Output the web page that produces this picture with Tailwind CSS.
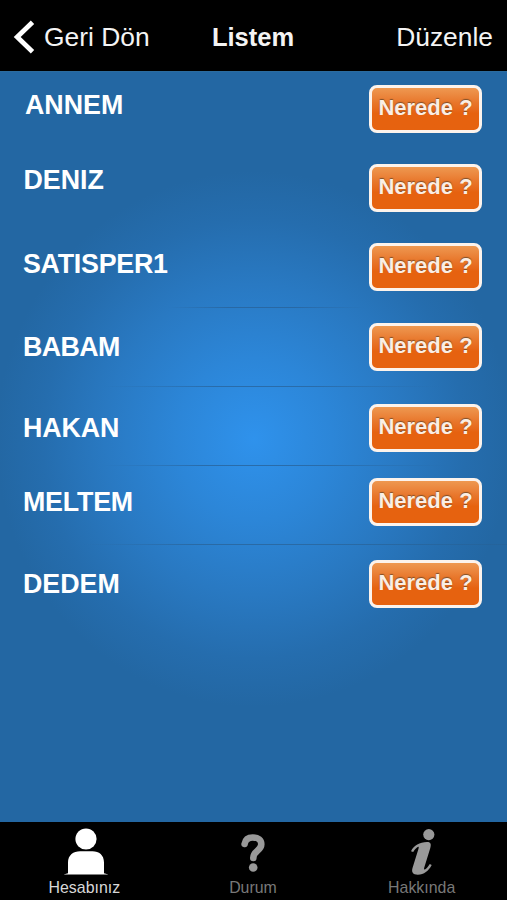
<!DOCTYPE html>
<html lang="tr">
<head>
<meta charset="utf-8">
<title>Listem</title>
<script src="https://cdn.jsdelivr.net/npm/@tailwindcss/browser@4"></script>
</head>
<body class="bg-black">
<div class="flex h-[900px] w-[507px] flex-col overflow-hidden bg-black font-['Liberation_Sans',Arial,sans-serif] text-white">
  <header class="grid h-[71px] shrink-0 grid-cols-3 items-center pr-[14px] pl-[13px] pt-0.5 text-[26.4px] leading-8 text-[#f4f4f4]">
    <a class="flex items-center gap-[9px] whitespace-nowrap">
      <svg class="h-[34px] w-[22px] shrink-0" viewBox="0 0 22 34" fill="none" stroke="#fff" stroke-width="4.8"><path d="M19.500 2.200 4.200 17 19.500 31.800"/></svg>
      <span>Geri Dön</span>
    </a>
    <h1 class="text-center text-[25.5px] font-bold">Listem</h1>
    <a class="text-right">Düzenle</a>
  </header>

  <main class="flex-1 border-t border-[#2b6c9f] bg-[#2367a3] bg-[radial-gradient(ellipse_258px_268px_at_254px_367px,#2f92ec_0%,#2c86d8_30%,#2979c2_58%,#256dae_82%,#2367a3_100%)]">
    <ul class="-mt-px flex flex-col">
      <li class="flex h-[78px] items-start justify-between pr-[25px] pl-[25px]">
        <span class="pt-5 text-[26.8px] leading-7 font-bold">ANNEM</span>
        <button class="mt-[14px] h-12 w-[113px] rounded-[8px] border-[3px] border-[#fcf3ec] bg-linear-to-b from-[#ee9850] via-[#e8762a] via-35% to-[#e6620f] to-60% pb-[3px] text-[22px] leading-7 font-bold whitespace-nowrap text-[#fbeee4] [text-shadow:0_-1px_1px_rgba(80,60,40,.7)]">Nerede ?</button>
      </li>
      <li class="flex h-[79px] items-start justify-between pr-[25px] pl-[23.500px]">
        <span class="pt-[17px] text-[26.8px] leading-7 font-bold">DENIZ</span>
        <button class="mt-[15px] h-12 w-[113px] rounded-[8px] border-[3px] border-[#fcf3ec] bg-linear-to-b from-[#ee9850] via-[#e8762a] via-35% to-[#e6620f] to-60% pb-[3px] text-[22px] leading-7 font-bold whitespace-nowrap text-[#fbeee4] [text-shadow:0_-1px_1px_rgba(80,60,40,.7)]">Nerede ?</button>
      </li>
      <li class="flex h-20 items-start justify-between bg-[linear-gradient(90deg,transparent_33%,#2868a4_45%,#2868a4_58%,transparent_72%)] bg-[length:100%_1px] bg-bottom bg-no-repeat pr-[25px] pl-[23px]">
        <span class="pt-[22px] text-[26.8px] leading-7 font-bold tracking-[-0.25px]">SATISPER1</span>
        <button class="mt-[15px] h-12 w-[113px] rounded-[8px] border-[3px] border-[#fcf3ec] bg-linear-to-b from-[#ee9850] via-[#e8762a] via-35% to-[#e6620f] to-60% pb-[3px] text-[22px] leading-7 font-bold whitespace-nowrap text-[#fbeee4] [text-shadow:0_-1px_1px_rgba(80,60,40,.7)]">Nerede ?</button>
      </li>
      <li class="flex h-[79px] items-start justify-between bg-[linear-gradient(90deg,transparent_20%,#296caa_42%,#296caa_62%,transparent_88%)] bg-[length:100%_1px] bg-bottom bg-no-repeat pr-[25px] pl-[23px]">
        <span class="pt-[25px] text-[26.8px] leading-7 font-bold tracking-[-0.6px]">BABAM</span>
        <button class="mt-[15px] h-12 w-[113px] rounded-[8px] border-[3px] border-[#fcf3ec] bg-linear-to-b from-[#ee9850] via-[#e8762a] via-35% to-[#e6620f] to-60% pb-[3px] text-[22px] leading-7 font-bold whitespace-nowrap text-[#fbeee4] [text-shadow:0_-1px_1px_rgba(80,60,40,.7)]">Nerede ?</button>
      </li>
      <li class="flex h-[79px] items-start justify-between bg-[linear-gradient(90deg,transparent_20%,#296caa_40%,#296caa_64%,transparent_90%)] bg-[length:100%_1px] bg-bottom bg-no-repeat pr-[25px] pl-[23px]">
        <span class="pt-[27px] text-[26.8px] leading-7 font-bold tracking-[-0.1px]">HAKAN</span>
        <button class="mt-[17px] h-12 w-[113px] rounded-[8px] border-[3px] border-[#fcf3ec] bg-linear-to-b from-[#ee9850] via-[#e8762a] via-35% to-[#e6620f] to-60% pb-[3px] text-[22px] leading-7 font-bold whitespace-nowrap text-[#fbeee4] [text-shadow:0_-1px_1px_rgba(80,60,40,.7)]">Nerede ?</button>
      </li>
      <li class="flex h-[79px] items-start justify-between bg-[linear-gradient(90deg,transparent_16%,#296aa5_38%,#296aa5_66%,#24639b_100%)] bg-[length:100%_1px] bg-bottom bg-no-repeat pr-[25px] pl-[23px]">
        <span class="pt-[22px] text-[26.8px] leading-7 font-bold tracking-[-0.2px]">MELTEM</span>
        <button class="mt-3 h-12 w-[113px] rounded-[8px] border-[3px] border-[#fcf3ec] bg-linear-to-b from-[#ee9850] via-[#e8762a] via-35% to-[#e6620f] to-60% pb-[3px] text-[22px] leading-7 font-bold whitespace-nowrap text-[#fbeee4] [text-shadow:0_-1px_1px_rgba(80,60,40,.7)]">Nerede ?</button>
      </li>
      <li class="flex h-20 items-start justify-between pr-[25px] pl-[23px]">
        <span class="pt-[25px] text-[26.8px] leading-7 font-bold">DEDEM</span>
        <button class="mt-[15px] h-12 w-[113px] rounded-[8px] border-[3px] border-[#fcf3ec] bg-linear-to-b from-[#ee9850] via-[#e8762a] via-35% to-[#e6620f] to-60% pb-[3px] text-[22px] leading-7 font-bold whitespace-nowrap text-[#fbeee4] [text-shadow:0_-1px_1px_rgba(80,60,40,.7)]">Nerede ?</button>
      </li>
    </ul>
  </main>

  <nav class="grid h-[78px] shrink-0 grid-cols-3 bg-black pr-px text-center text-[15.9px] leading-[18px] text-[#787878]">
    <a class="flex flex-col items-center pt-[5px] text-[#d8d8d8]">
      <svg class="h-[52px] w-[46px] translate-x-[2px]" viewBox="0 0 46 52" fill="#fff"><circle cx="23" cy="12" r="10.6"/><path d="M5 46.200V35.500C5 28 10.500 24.200 17 24.200H29.500C36 24.200 41 28 41 35.500V46.200L45.500 47.500H.5Z"/></svg>
      <span>Hesabınız</span>
    </a>
    <a class="flex flex-col items-center pt-[5px]">
      <svg class="h-[52px] w-[46px]" viewBox="0 0 46 52" fill="none" stroke="#999"><path d="M14.600 17C15.400 12.300 18.300 10.500 22.700 10.500C28.300 10.500 31.300 13.200 31.300 17.300C31.300 24 23.300 23.700 23.300 31" stroke-width="6.600" stroke-linecap="round"/><circle cx="23.200" cy="40.500" r="4.300" fill="#999" stroke="none"/></svg>
      <span>Durum</span>
    </a>
    <a class="flex flex-col items-center pt-[5px]">
      <svg class="h-[52px] w-[46px]" viewBox="0 0 46 52" fill="#999"><circle cx="29.800" cy="7.600" r="5.600"/><path d="M12 24.200C15 18.500 20.500 15.200 28 15.100C32 15 32.300 17.500 31.300 21L25.200 40.700C24.700 42.500 25.500 43 27 41.800C28.500 40.600 29.700 38.700 30.800 37L32.700 38C29.500 44 25 47.700 18.800 47.700C13.800 47.700 12.300 45 13.500 41L19.500 21.800C20.100 19.800 19.500 19.300 18 20.500C16.500 21.600 15.200 23.400 14.200 25Z"/></svg>
      <span>Hakkında</span>
    </a>
  </nav>
</div>
</body>
</html>
